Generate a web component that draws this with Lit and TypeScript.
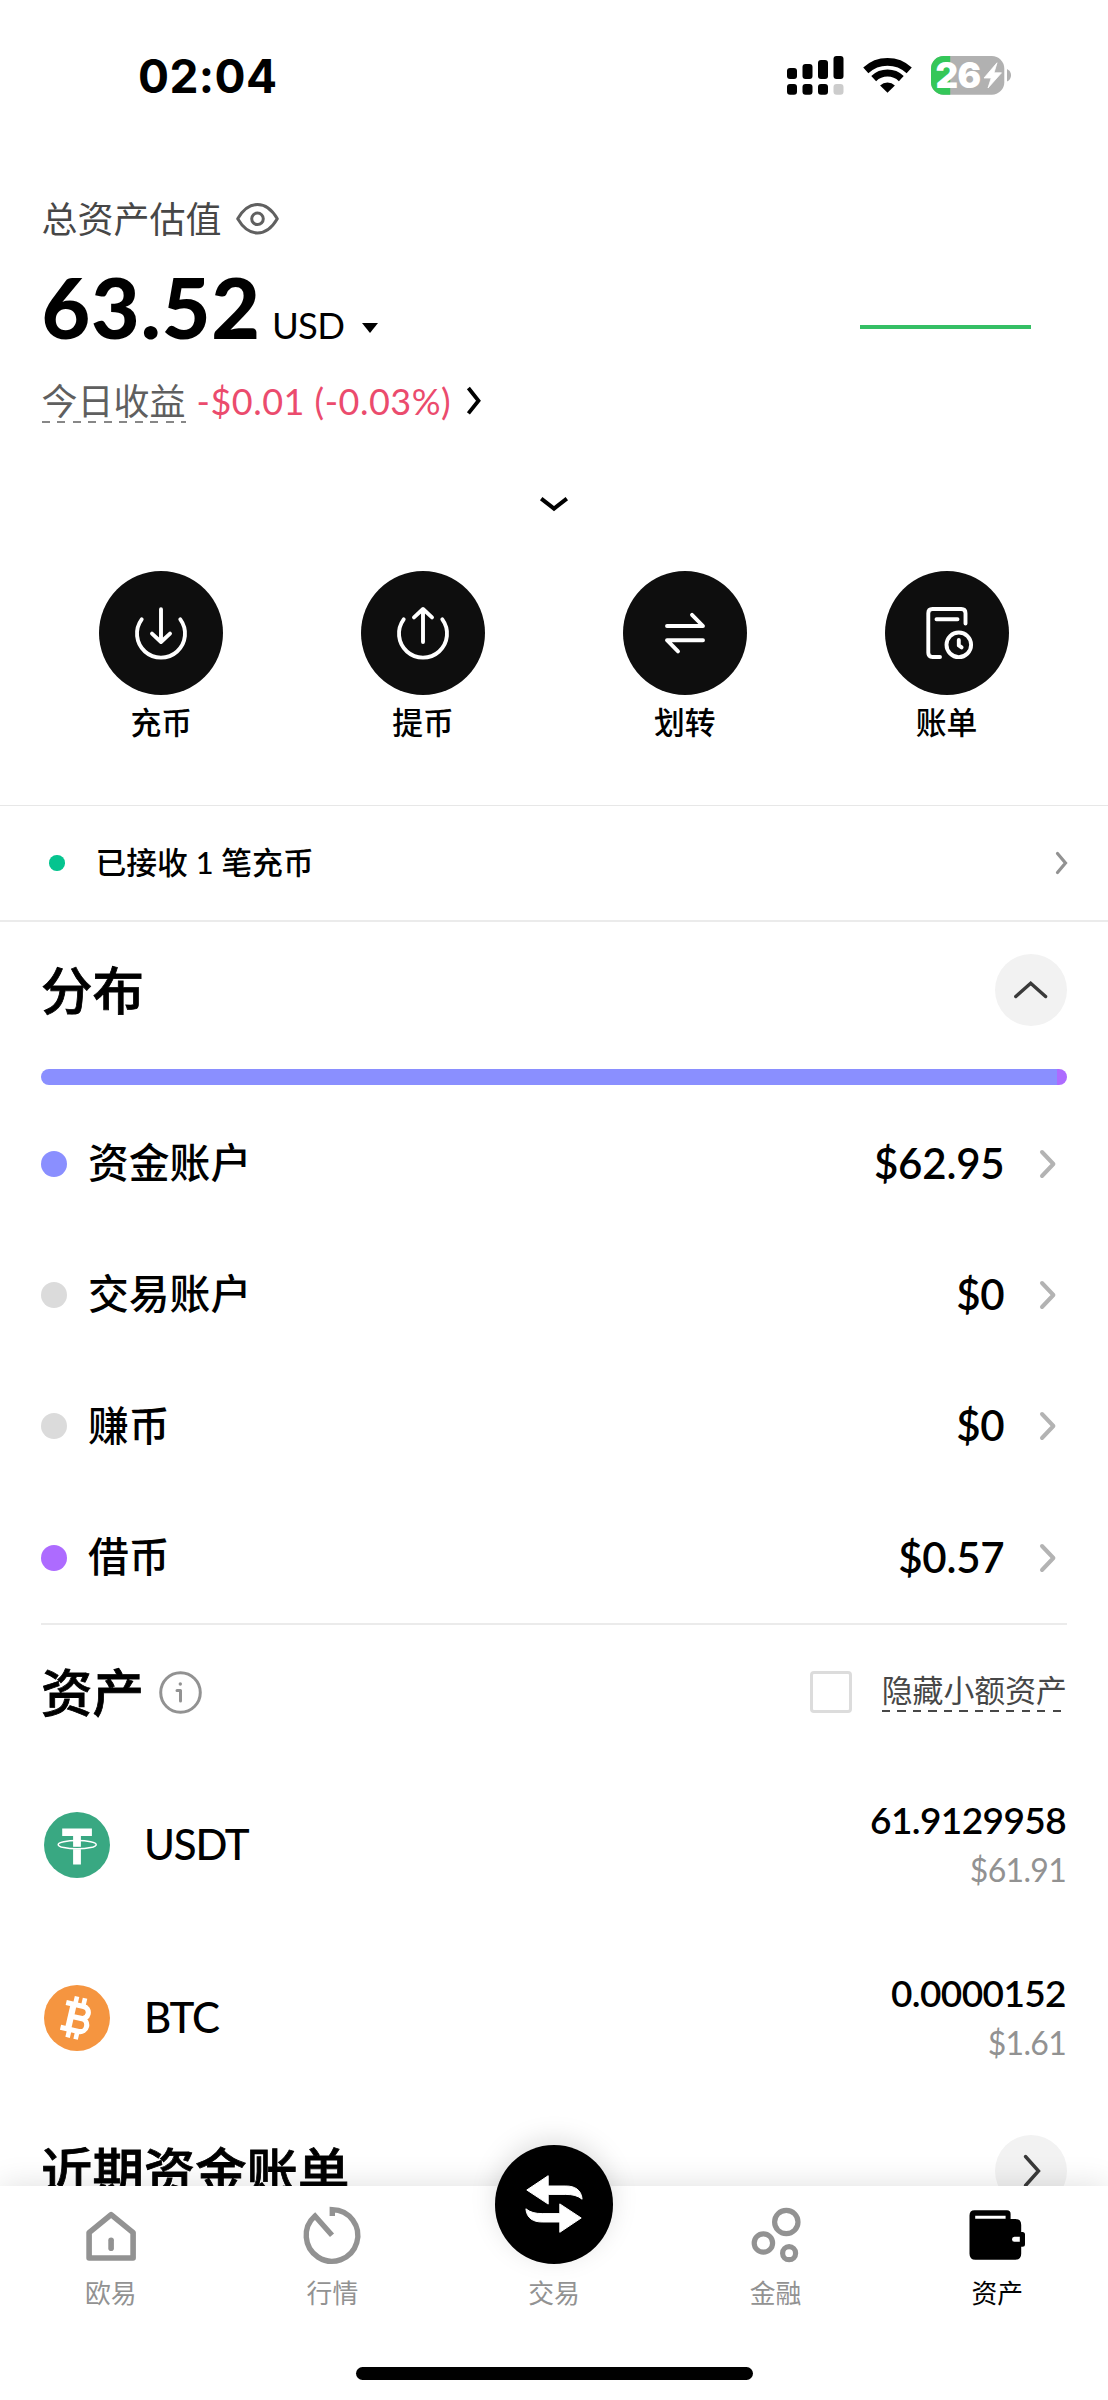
import { LitElement, html, css, svg } from "lit";
import { customElement } from "lit/decorators.js";
import { styleMap } from "lit/directives/style-map.js";

const accounts = [
  { name: "资金账户", value: "$62.95", color: "#8a8fff" },
  { name: "交易账户", value: "$0", color: "#dbdbdb" },
  { name: "赚币", value: "$0", color: "#dbdbdb" },
  { name: "借币", value: "$0.57", color: "#ad6bff" },
];

const openRing = svg`<path d="M-19.3 -13.6A24 24 0 1 0 19.3 -13.6" />`;

const actions = [
  { label: "充币", icon: svg`${openRing}<path d="M0 -23.7V8.5M-9 .6L0 9L9 .6" />` },
  { label: "提币", icon: svg`${openRing}<path d="M0 9V-23.5M-9 -15.6L0 -24L9 -15.6" />` },
  { label: "划转", icon: svg`<path d="M-18 -7H18L7 -18.2M18 7.2H-18L-7 18.4" />` },
  {
    label: "账单",
    icon: svg`<path d="M18.5 -9.5V-19.8Q18.5 -24 14.3 -24H-14.5Q-18.7 -24 -18.7 -19.8V19.8Q-18.7 24 -14.5 24H-7M-10.5 -13.7H10.5" /><circle cx="11.8" cy="11.8" r="12.3" /><path d="M11.8 7V12.4L14.6 14.4" />`,
  },
];

const tether = html`<svg class="coin" viewBox="44 1812 66 66">
  <circle cx="77" cy="1845" r="33" fill="#39a882" />
  <path d="M62.2 1828.5H91.9V1836H80.9V1864.4H73.100V1836H62.2Z" fill="#fff" />
  <path d="M73 1848H81" stroke="#39a882" stroke-width="2.4" />
  <ellipse cx="77.2" cy="1844.7" rx="19" ry="4.1" fill="none" stroke="#fff" stroke-width="1.5" />
</svg>`;

const bitcoin = html`<svg class="coin" viewBox="-33 -33 66 66">
  <circle r="33" fill="#f59540" />
  <g transform="rotate(13)" fill="none" stroke="#fff">
    <path d="M-14 -12.7H3.8a5.6 5.6 0 0 1 0 12.2H-6M3.5 -.5H4.6a6.6 6.6 0 0 1 0 13.2H-14" stroke-width="5.2" />
    <path d="M-6.3 -13V13" stroke-width="6.2" />
    <path d="M-4.8 -21V-13M3.4 -21V-13M-4.8 13V21M3.4 13V21" stroke-width="4.6" />
  </g>
</svg>`;

const coins = [
  { name: "USDT", icon: tether, amount: "61.9129958", value: "$61.91" },
  { name: "BTC", icon: bitcoin, amount: "0.0000152", value: "$1.61" },
];

const tabs = [
  {
    label: "欧易",
    icon: html`<svg class="tab-icon" viewBox="80.8 2205 60 60" fill="none" stroke="currentColor" stroke-width="5.6" stroke-linejoin="round" stroke-linecap="round">
      <path d="M110.9 2214.6L132.9 2232.6V2258H88.9V2232.6Z" /><path d="M110.9 2240.3V2248.3" />
    </svg>`,
  },
  {
    label: "行情",
    icon: html`<svg class="tab-icon" viewBox="302.5 2205 60 60" fill="none" stroke="currentColor" stroke-width="5.4" stroke-linejoin="miter">
      <path d="M332.8 2216V2209.6A25.8 25.8 0 1 1 315.5 2216L332.500 2235.2" />
    </svg>`,
  },
  { label: "交易", icon: null },
  {
    label: "金融",
    icon: html`<svg class="tab-icon" viewBox="745.5 2205 60 60" fill="none" stroke="currentColor" stroke-width="5.2">
      <circle cx="785.8" cy="2222" r="11.7" /><circle cx="762.9" cy="2243" r="9.2" /><circle cx="788.6" cy="2253.2" r="6.5" />
    </svg>`,
  },
  {
    label: "资产",
    active: true,
    icon: html`<svg class="tab-icon" viewBox="967 2205 60 60" fill="currentColor" fill-rule="evenodd">
      <path d="M974.5 2210.3H1007Q1010.6 2210.3 1010.6 2214V2219H1015.5Q1021.2 2219 1021.2 2225V2232H1022.5Q1025 2232 1025 2234.5V2244.2Q1025 2246.7 1022.5 2246.7H1021.2V2253.7Q1021.2 2259.7 1015.5 2259.7H975.5Q969.5 2259.7 969.5 2253.7V2215.5Q969.5 2210.3 974.5 2210.3ZM975.2 2215.8V2218.8H1005.6V2215.8ZM1014.4 2236.7Q1012 2236.7 1012 2239.2Q1012 2241.7 1014.4 2241.7H1019.8V2236.7Z" />
    </svg>`,
  },
];

const nextChevron = html`<svg class="row-chevron" width="18" height="34" viewBox="0 0 18 34"><path d="M3 5L14.4 17L3 29" /></svg>`;

@customElement("app-root")
export class AppRoot extends LitElement {
  static styles = css`
    :host {
      display: block;
      position: relative;
      width: 1108px;
      height: 2400px;
      overflow: hidden;
      background: #fff;
      color: #000;
      font-family: Lato, "Noto Sans CJK SC", sans-serif;
    }
    * { box-sizing: border-box; }
    svg { display: block; flex: none; overflow: visible; }
    .status {
      height: 150px;
      padding: 0 97px 0 138px;
      display: flex;
      align-items: center;
      justify-content: space-between;
    }
    .time { font: 700 46px/60px Inter, sans-serif; letter-spacing: 0.4px; padding-top: 1px; }
    .status-icons { display: flex; align-items: center; }
    .summary { height: 390px; padding: 41px 41.5px 0; display: flex; justify-content: space-between; }
    .caption { display: flex; align-items: center; height: 56px; gap: 14.5px; color: #474747; font-size: 36px; line-height: 56px; }
    .total { display: flex; align-items: baseline; height: 100px; line-height: 100px; margin-top: 9.5px; }
    .total-value { font-size: 84px; font-weight: 900; letter-spacing: 0.9px; margin-right: 11px; }
    .unit { font-size: 36.5px; letter-spacing: -0.6px; }
    .caret { border: 8px solid transparent; border-top: 10.5px solid #000; border-bottom: 0; margin-left: 18px; align-self: flex-end; margin-bottom: 24px; }
    .pnl { display: flex; align-items: center; height: 56px; margin-top: 16.5px; font-size: 36px; line-height: 56px; }
    .dashed { position: relative; }
    .dashed::after {
      content: "";
      position: absolute;
      left: 0;
      right: 0;
      bottom: 1px;
      height: 2px;
      background: repeating-linear-gradient(90deg, currentColor 0 8px, transparent 8px 15.5px);
    }
    .pnl .dashed { color: #5f5f5f; }
    .pnl .dashed::after { bottom: 6px; opacity: 0.75; }
    .loss { color: #eb4b6d; margin-left: 11px; margin-right: 15.5px; letter-spacing: 0.5px; }
    .spark { width: 171px; height: 4px; background: #35bf65; margin: 134px 35.5px 0 0; }
    .expand { height: 31px; margin-top: -43px; display: flex; justify-content: center; align-items: flex-start; }
    .actions { display: grid; grid-template-columns: repeat(4, 1fr); padding: 0 30.5px; margin-top: 43px; height: 234px; }
    .action { display: flex; flex-direction: column; align-items: center; }
    .action-disc { width: 124px; height: 124px; border-radius: 50%; background: #0e0e0e; display: grid; place-items: center; }
    .action-icon { width: 60px; height: 60px; fill: none; stroke: #fff; stroke-width: 3.9; stroke-linecap: round; stroke-linejoin: round; }
    .action-label { font-size: 30.8px; font-weight: 500; line-height: 40px; margin-top: 8px; }
    .notice {
      height: 117px;
      border-top: 1px solid #e7e7e7;
      border-bottom: 2px solid #ebebeb;
      padding: 0 39px 0 49px;
      display: flex;
      align-items: center;
      font-size: 30.8px;
      font-weight: 500;
    }
    .notice-dot { width: 15.5px; height: 15.5px; border-radius: 50%; background: #05c48f; margin-right: 31px; }
    .notice-text { flex: 1; padding-bottom: 5px; }
    .section-head { display: flex; align-items: center; justify-content: space-between; padding: 0 41px; }
    .title { font-size: 51.4px; font-weight: 500; -webkit-text-stroke: 0.8px #000; line-height: 72px; }
    .dist-head { height: 136px; }
    .round { width: 72px; height: 72px; border-radius: 50%; background: #f2f2f2; display: grid; place-items: center; }
    .bar { display: flex; height: 16px; margin: 11px 41px 0; border-radius: 8px; overflow: hidden; }
    .accounts { margin: 13px 41px 0; height: 527px; border-bottom: 2px solid #ebebeb; }
    .account { display: flex; align-items: center; height: 131.3px; padding-right: 10px; }
    .account-dot { width: 26px; height: 26px; border-radius: 50%; }
    .account-name { flex: 1; margin-left: 21px; font-size: 40.8px; font-weight: 500; line-height: 60px; padding-bottom: 1px; }
    .account-value { font-size: 42px; font-weight: 600; margin-right: 34.5px; line-height: 60px; letter-spacing: -0.2px; padding-bottom: 2px; }
    .row-chevron { fill: none; stroke: #b3b3b3; stroke-width: 4; stroke-linecap: round; stroke-linejoin: round; }
    .assets-head { height: 134px; }
    .assets-title { display: flex; align-items: center; gap: 15.5px; }
    .hide-small { display: flex; align-items: center; gap: 30px; font-size: 30.9px; line-height: 44px; color: #474747; }
    .hide-small .dashed { top: -1.5px; }
    .checkbox { width: 42px; height: 42px; border: 3.5px solid #dcdcdc; border-radius: 4px; }
    .asset { display: flex; align-items: center; height: 172.7px; padding: 0 42px 0 44px; }
    .coin { width: 66px; height: 66px; }
    .asset-name { flex: 1; margin-left: 34px; font-size: 42px; font-weight: 500; line-height: 60px; letter-spacing: -1.2px; padding-bottom: 3px; }
    .asset-values { text-align: right; display: flex; flex-direction: column; }
    .asset-amount { font-size: 37px; font-weight: 600; line-height: 49px; letter-spacing: -0.6px; }
    .asset-usd { font-size: 32px; line-height: 51px; letter-spacing: -0.7px; color: #929292; }
    .recent-head { height: 134px; }
    .tabbar {
      position: absolute;
      left: 0;
      right: 0;
      top: 2186px;
      height: 214px;
      background: #fff;
      display: grid;
      grid-template-columns: repeat(5, 1fr);
      box-shadow: 0 0 30px rgba(0, 0, 0, 0.13);
    }
    .tab { display: flex; flex-direction: column; align-items: center; color: #929292; padding-top: 19px; }
    .active { color: #000; }
    .tab-icon { width: 60px; height: 60px; }
    .tab-label { font-size: 25.8px; line-height: 36px; margin-top: 9.5px; }
    .trade-wrap { height: 60px; }
    .trade-disc { width: 118.5px; height: 118.5px; margin-top: -60px; border-radius: 50%; background: #000; display: grid; place-items: center; filter: drop-shadow(0 -6px 12px rgba(0, 0, 0, 0.12)); }
    .home-bar { position: absolute; left: 355.5px; top: 2366.5px; width: 397px; height: 13px; border-radius: 7px; background: #000; }
  `;

  render() {
    return html`
      <div class="status">
        <div class="time">02:04</div>
        <div class="status-icons">
          <svg width="57" height="39" viewBox="786.5 55 57 39">
            <rect x="786.5" y="67" width="10" height="11" rx="3" /><rect x="802" y="63" width="10" height="15" rx="3" />
            <rect x="817.5" y="59" width="10" height="19" rx="3" /><rect x="833" y="55" width="10" height="23" rx="3" />
            <rect x="786.5" y="83" width="10" height="10.7" rx="3" /><rect x="802" y="83" width="10" height="10.7" rx="3" />
            <rect x="817.5" y="83" width="10" height="10.7" rx="3" /><rect x="833" y="83" width="10" height="10.7" rx="3" fill="#ccc" />
          </svg>
          <svg width="87.5" height="39" viewBox="843.5 55 87.5 39">
            <path d="M865.3 69.400A32 32 0 0 1 908.700 69.400" fill="none" stroke="#000" stroke-width="7.6" />
            <path d="M873.2 77.600A20 20 0 0 1 900.800 77.600" fill="none" stroke="#000" stroke-width="7" />
            <path d="M879.6 84.600A10.600 10.600 0 0 1 894.400 84.600L887 91.800Z" />
          </svg>
          <svg width="80" height="39" viewBox="931 55 80 39">
            <defs><clipPath id="cell"><rect x="931" y="55" width="73.3" height="38.7" rx="12.5" /></clipPath></defs>
            <g clip-path="url(#cell)"><rect x="931" y="55" width="74" height="39" fill="#b1b1b1" /><rect x="931" y="55" width="19.2" height="39" fill="#34c759" /></g>
            <path d="M1007 68Q1011 70 1011 74.300Q1011 78.600 1007 80.600Z" fill="#b1b1b1" />
            <path d="M997 61.800L984 77H991.200L988 87L1001.500 71.800H994Z" fill="#fff" stroke="#fff" stroke-width=".8" stroke-linejoin="round" />
            <text x="935.5" y="87" font-family="Inter, sans-serif" font-size="35" font-weight="900" letter-spacing="-.6" fill="#fff">26</text>
          </svg>
        </div>
      </div>

      <section class="summary">
        <div>
          <div class="caption">
            <span>总资产估值</span>
            <svg width="43" height="34" viewBox="236.5 202 43 34" fill="none" stroke="#606060" stroke-width="3" stroke-linejoin="round">
              <path d="M238.2 218.800C243 210.500 250 204.500 258 204.500S273 210.500 277.800 218.800C273 227 266 233 258 233S243 227 238.200 218.800Z" />
              <circle cx="258" cy="218.800" r="5.800" />
            </svg>
          </div>
          <div class="total">
            <span class="total-value">63.52</span><span class="unit">USD</span><span class="caret"></span>
          </div>
          <div class="pnl">
            <span class="dashed">今日收益</span><span class="loss">-$0.01 (-0.03%)</span>
            <svg width="14" height="28" viewBox="470 389 14 28" fill="none" stroke="#000" stroke-width="3.800"><path d="M471.400 390L481.500 402.700L471.400 415.400" /></svg>
          </div>
        </div>
        <div class="spark"></div>
      </section>
      <div class="expand">
        <svg width="28" height="16" viewBox="540 497 28 16" fill="none" stroke="#000" stroke-width="4"><path d="M541.200 498.700L554 508.600L566.800 498.700" /></svg>
      </div>
      <section class="actions">
        ${actions.map(
          (a) => html`<div class="action">
            <div class="action-disc"><svg class="action-icon" viewBox="-30 -30 60 60">${a.icon}</svg></div>
            <div class="action-label">${a.label}</div>
          </div>`
        )}
      </section>
      <section class="notice">
        <span class="notice-dot"></span><span class="notice-text">已接收 1 笔充币</span>
        <svg width="14" height="24" viewBox="0 0 14 24" fill="none" stroke="#929292" stroke-width="3.200" stroke-linecap="round"><path d="M2.500 2.500L10.500 12L2.500 21.500" /></svg>
      </section>

      <section class="section-head dist-head">
        <div class="title">分布</div>
        <div class="round"><svg width="34" height="20" viewBox="1014 980 34 20" fill="none" stroke="#3a3a3a" stroke-width="3.400" stroke-linecap="round"><path d="M1015.800 996.500L1030.700 983.200L1045.600 996.500" /></svg></div>
      </section>
      <div class="bar">
        <div style=${styleMap({ width: "99.03%", background: "#8a8fff" })}></div>
        <div style=${styleMap({ width: "0.97%", background: "#ad6bff" })}></div>
      </div>
      <section class="accounts">
        ${accounts.map(
          (a) => html`<div class="account">
            <span class="account-dot" style=${styleMap({ background: a.color })}></span>
            <span class="account-name">${a.name}</span>
            <span class="account-value">${a.value}</span>
            ${nextChevron}
          </div>`
        )}
      </section>

      <section class="section-head assets-head">
        <div class="assets-title">
          <div class="title">资产</div>
          <svg width="43" height="43" viewBox="159.500 1670.500 43 43" fill="none" stroke="#929292" stroke-width="3" stroke-linecap="round" stroke-linejoin="round">
            <circle cx="181" cy="1692" r="19.800" /><path d="M177.500 1690H181V1700.500" /><circle cx="180.800" cy="1683.500" r="1.700" fill="#929292" stroke="none" />
          </svg>
        </div>
        <div class="hide-small"><span class="checkbox"></span><span class="dashed">隐藏小额资产</span></div>
      </section>
      ${coins.map(
        (c) => html`<div class="asset">
          ${c.icon}<span class="asset-name">${c.name}</span>
          <div class="asset-values"><span class="asset-amount">${c.amount}</span><span class="asset-usd">${c.value}</span></div>
        </div>`
      )}
      <section class="section-head recent-head">
        <div class="title">近期资金账单</div>
        <div class="round"><svg width="20" height="34" viewBox="0 0 20 34" fill="none" stroke="#3a3a3a" stroke-width="3.400" stroke-linecap="round"><path d="M4.500 2.500L17.500 17L4.500 31.500" /></svg></div>
      </section>

      <nav class="tabbar">
        ${tabs.map(
          (t) => html`<div class="tab ${t.active ? "active" : ""}">
            ${t.icon ??
            html`<div class="trade-wrap"><div class="trade-disc">
              <svg width="60" height="60" viewBox="524.200 2174.300 60 60" fill="#fff" stroke="#fff" stroke-linejoin="round">
                ${[0, 180].map(
                  (r) => svg`<path transform="rotate(${r} 554.2 2204.3)" stroke-width="1" d="M527 2190.300L548.400 2176V2186.300H566C575 2186.300 581.500 2190 582.300 2199.500C578 2196 573 2194.700 566 2194.700H548.400V2204.400Z" />`
                )}
              </svg>
            </div></div>`}
            <span class="tab-label">${t.label}</span>
          </div>`
        )}
      </nav>
      <div class="home-bar"></div>
    `;
  }
}
